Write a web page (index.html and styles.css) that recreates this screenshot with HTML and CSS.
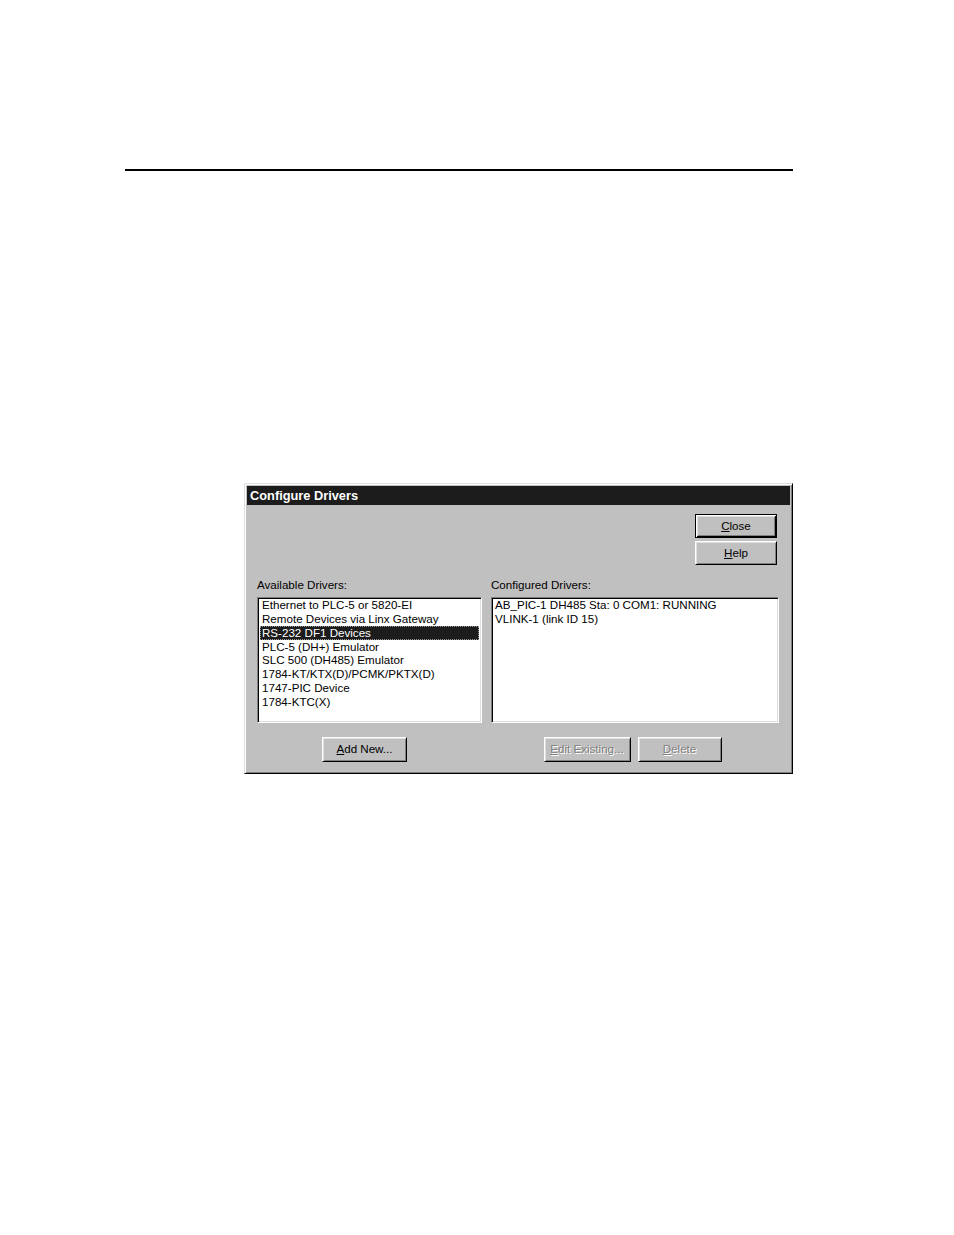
FILE: index.html
```html
<!DOCTYPE html>
<html>
<head>
<meta charset="utf-8">
<link rel="stylesheet" href="styles.css">
</head>
<body>
<div class="page">
  <div class="rule"></div>
  <div class="dialog">
    <div class="titlebar">Configure Drivers</div>
    <div class="dlg-body">
      <div class="top-buttons">
        <div class="btn default"><span><u>C</u>lose</span></div>
        <div class="btn"><span><u>H</u>elp</span></div>
      </div>
      <div class="columns">
        <div class="col">
          <div class="label">Available Drivers:</div>
          <div class="listbox">
            <div class="item">Ethernet to PLC-5 or 5820-EI</div>
            <div class="item">Remote Devices via Linx Gateway</div>
            <div class="item selected">RS-232 DF1 Devices</div>
            <div class="item">PLC-5 (DH+) Emulator</div>
            <div class="item">SLC 500 (DH485) Emulator</div>
            <div class="item">1784-KT/KTX(D)/PCMK/PKTX(D)</div>
            <div class="item">1747-PIC Device</div>
            <div class="item">1784-KTC(X)</div>
          </div>
          <div class="bottom-buttons">
            <div class="btn add"><span><u>A</u>dd New...</span></div>
          </div>
        </div>
        <div class="col">
          <div class="label">Configured Drivers:</div>
          <div class="listbox right">
            <div class="item">AB_PIC-1 DH485 Sta: 0 COM1: RUNNING</div>
            <div class="item">VLINK-1 (link ID 15)</div>
          </div>
          <div class="bottom-buttons pair">
            <div class="btn disabled edit"><span><u>E</u>dit Existing...</span></div>
            <div class="btn disabled del"><span><u>D</u>elete</span></div>
          </div>
        </div>
      </div>
    </div>
  </div>
</div>
</body>
</html>
```

FILE: styles.css
```css
html, body {
  margin: 0;
  padding: 0;
  background: #ffffff;
}

.page {
  width: 954px;
  height: 1235px;
  box-sizing: border-box;
  padding: 169px 0 0 125px;
  font-family: "Liberation Sans", Arial, sans-serif;
  font-size: 11.6px;
  color: #000;
}

.rule {
  width: 668px;
  height: 2px;
  background: #000;
}

.dialog {
  margin-top: 312px;
  margin-left: 119px;
  width: 549px;
  box-sizing: border-box;
  background: #c0c0c0;
  border: 1px solid;
  border-color: #dfdfdf #000 #000 #dfdfdf;
  box-shadow: inset 1px 1px 0 #fff, inset -1px -1px 0 #808080;
  padding: 2px;
}

.titlebar {
  height: 19px;
  background: #1c1c1c;
  color: #fff;
  font-weight: bold;
  font-size: 12.8px;
  line-height: 19px;
  padding-left: 3px;
}

.dlg-body {
  padding: 9px 12px 9px 10px;
}

.top-buttons {
  display: flex;
  flex-direction: column;
  align-items: flex-end;
  gap: 3px;
  margin-right: 1px;
}

.btn {
  box-sizing: border-box;
  width: 82px;
  height: 24px;
  padding-bottom: 2px;
  background: #c0c0c0;
  border: 1px solid;
  border-color: #fff #000 #000 #fff;
  box-shadow: inset 1px 1px 0 #dfdfdf, inset -1px -1px 0 #808080;
  display: flex;
  align-items: center;
  justify-content: center;
  font-size: 11.6px;
  color: #000;
}

.btn.default {
  border: 1px solid #000;
  box-shadow: inset 1px 1px 0 #fff, inset -1px -1px 0 #000, inset 2px 2px 0 #dfdfdf, inset -2px -2px 0 #808080;
}

.columns {
  display: grid;
  grid-template-columns: 225px 288px;
  column-gap: 9px;
  margin-top: 13px;
}

.col {
  display: flex;
  flex-direction: column;
}

.label {
  height: 14px;
  line-height: 14px;
  margin-bottom: 5px;
}

.listbox {
  box-sizing: border-box;
  height: 126px;
  background: #fff;
  border: 1px solid;
  border-color: #808080 #fff #fff #808080;
  box-shadow: inset 1px 1px 0 #000, inset -1px -1px 0 #dfdfdf;
  padding: 0 2px 1px;
}

.item {
  height: 13.85px;
  line-height: 14px;
  padding-left: 2px;
  white-space: nowrap;
}

.listbox.right .item {
  padding-left: 1px;
}

.item.selected {
  background: #1c1c1c;
  color: #fff;
  outline: 1px dotted #9a9a9a;
  outline-offset: -1px;
}

.bottom-buttons {
  display: flex;
  justify-content: center;
  gap: 7px;
  margin-top: 14px;
}

.bottom-buttons .btn {
  height: 25px;
}

.btn.add {
  width: 85px;
  margin-right: 10px;
}

.btn.edit {
  width: 87px;
}

.btn.del {
  width: 84px;
}

.bottom-buttons.pair {
  margin-right: 5px;
}

.btn.disabled {
  color: #808080;
  text-shadow: 1px 1px 0 #fff;
}
```
